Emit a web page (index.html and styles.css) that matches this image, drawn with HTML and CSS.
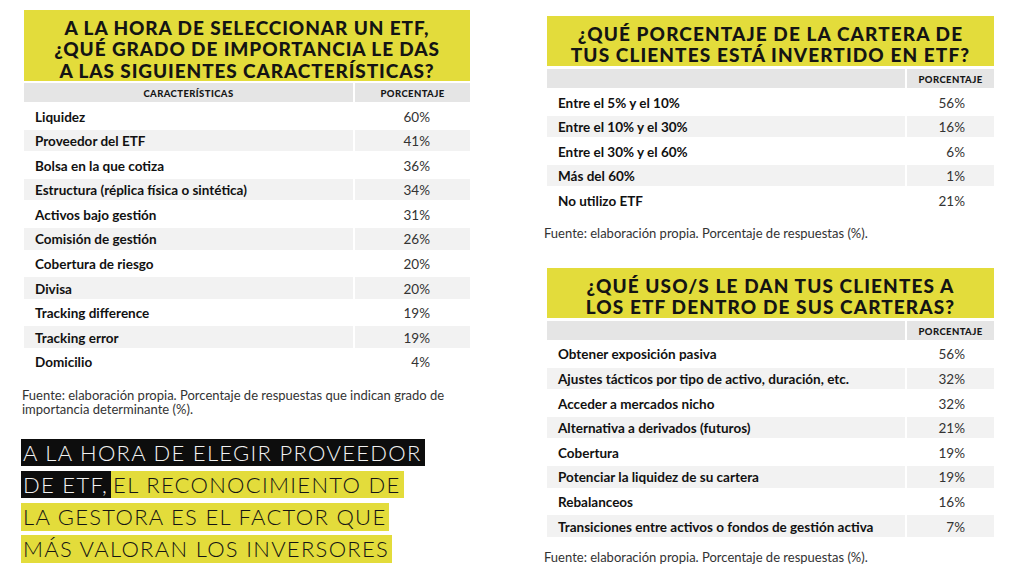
FILE: index.html
```html
<!DOCTYPE html>
<html lang="es">
<head>
<meta charset="utf-8">
<title>ETF encuesta</title>
<link rel="stylesheet" href="styles.css">
</head>
<body>
<div class="page">
  <section class="col col-left">
    <h2 class="title title-lg">A LA HORA DE SELECCIONAR UN ETF,<br>¿QUÉ GRADO DE IMPORTANCIA LE DAS<br>A LAS SIGUIENTES CARACTERÍSTICAS?</h2>
    <div class="tbl tbl-left">
      <div class="th">CARACTERÍSTICAS</div><div class="th">PORCENTAJE</div>
      <div class="td lbl">Liquidez</div><div class="td val">60%</div>
      <div class="td lbl alt">Proveedor del ETF</div><div class="td val alt">41%</div>
      <div class="td lbl">Bolsa en la que cotiza</div><div class="td val">36%</div>
      <div class="td lbl alt">Estructura (réplica física o sintética)</div><div class="td val alt">34%</div>
      <div class="td lbl">Activos bajo gestión</div><div class="td val">31%</div>
      <div class="td lbl alt">Comisión de gestión</div><div class="td val alt">26%</div>
      <div class="td lbl">Cobertura de riesgo</div><div class="td val">20%</div>
      <div class="td lbl alt">Divisa</div><div class="td val alt">20%</div>
      <div class="td lbl">Tracking difference</div><div class="td val">19%</div>
      <div class="td lbl alt">Tracking error</div><div class="td val alt">19%</div>
      <div class="td lbl">Domicilio</div><div class="td val">4%</div>
    </div>
    <p class="note note-left">Fuente: elaboración propia. Porcentaje de respuestas que indican grado de<br>importancia determinante (%).</p>
    <div class="callout">
      <div class="cl"><span class="blk">A LA HORA DE ELEGIR PROVEEDOR</span></div>
      <div class="cl"><span class="blk">DE ETF,</span><span class="ylw">EL RECONOCIMIENTO DE</span></div>
      <div class="cl"><span class="ylw">LA GESTORA ES EL FACTOR QUE</span></div>
      <div class="cl"><span class="ylw">MÁS VALORAN LOS INVERSORES</span></div>
    </div>
  </section>

  <section class="col col-right">
    <h2 class="title title-sm t1">¿QUÉ PORCENTAJE DE LA CARTERA DE<br>TUS CLIENTES ESTÁ INVERTIDO EN ETF?</h2>
    <div class="tbl tbl-right">
      <div class="th"></div><div class="th">PORCENTAJE</div>
      <div class="td lbl">Entre el 5% y el 10%</div><div class="td val">56%</div>
      <div class="td lbl alt">Entre el 10% y el 30%</div><div class="td val alt">16%</div>
      <div class="td lbl">Entre el 30% y el 60%</div><div class="td val">6%</div>
      <div class="td lbl alt">Más del 60%</div><div class="td val alt">1%</div>
      <div class="td lbl">No utilizo ETF</div><div class="td val">21%</div>
    </div>
    <p class="note note-r1">Fuente: elaboración propia. Porcentaje de respuestas (%).</p>

    <h2 class="title title-sm t2">¿QUÉ USO/S LE DAN TUS CLIENTES A<br>LOS ETF DENTRO DE SUS CARTERAS?</h2>
    <div class="tbl tbl-right">
      <div class="th"></div><div class="th">PORCENTAJE</div>
      <div class="td lbl">Obtener exposición pasiva</div><div class="td val">56%</div>
      <div class="td lbl alt">Ajustes tácticos por tipo de activo, duración, etc.</div><div class="td val alt">32%</div>
      <div class="td lbl">Acceder a mercados nicho</div><div class="td val">32%</div>
      <div class="td lbl alt">Alternativa a derivados (futuros)</div><div class="td val alt">21%</div>
      <div class="td lbl">Cobertura</div><div class="td val">19%</div>
      <div class="td lbl alt">Potenciar la liquidez de su cartera</div><div class="td val alt">19%</div>
      <div class="td lbl">Rebalanceos</div><div class="td val">16%</div>
      <div class="td lbl alt">Transiciones entre activos o fondos de gestión activa</div><div class="td val alt">7%</div>
    </div>
    <p class="note note-r2">Fuente: elaboración propia. Porcentaje de respuestas (%).</p>
  </section>
</div>
</body>
</html>
```

FILE: styles.css
```css
* { box-sizing: border-box; }

html, body {
  margin: 0;
  padding: 0;
  background: #ffffff;
}

body {
  font-family: Lato, "Liberation Sans", sans-serif;
  color: #111;
  width: 1024px;
  height: 587px;
  overflow: hidden;
}

.page {
  display: flex;
  align-items: flex-start;
  padding-left: 22px;
}

.col-left {
  width: 448px;
  padding-top: 10px;
}

.col-right {
  width: 450px;
  margin-left: 74px;
  padding-top: 16px;
}

/* Titles */
.title {
  margin: 0;
  background: #e3dc3b;
  color: #141414;
  font-weight: 900;
  text-align: center;
  text-transform: uppercase;
  white-space: nowrap;
}

.title-lg {
  margin-left: 2px;
  width: 446px;
  height: 71px;
  padding-top: 7px;
  font-size: 19px;
  line-height: 21.3px;
  letter-spacing: 0.9px;
}

.title-sm {
  margin-left: 3px;
  width: 447px;
  height: 50px;
  font-size: 19px;
  line-height: 21.3px;
  letter-spacing: 1.1px;
}

.t1 { padding-top: 7px; }
.t2 { padding-top: 7px; }

/* Tables */
.tbl {
  display: grid;
  column-gap: 2px;
  row-gap: 3px;
  grid-auto-rows: 21.6px;
}

.tbl-left {
  margin: 2px 0 0 2px;
  grid-template-columns: 329px 115px;
  grid-template-rows: 19px;
}

.tbl-right {
  margin: 3px 0 0 3px;
  grid-template-columns: 358px 87px;
  grid-template-rows: 19px;
}

.th {
  background: #e5e5e5;
  font-size: 9.5px;
  font-weight: 900;
  letter-spacing: 0.4px;
  text-align: center;
  line-height: 19px;
  padding-top: 1px;
  color: #161616;
}

.td {
  font-size: 13.5px;
  line-height: 21.6px;
  padding-top: 1.5px;
}

.td.alt { background: #f2f2f2; }

.lbl {
  font-weight: 700;
  padding-left: 11px;
  color: #111;
  white-space: nowrap;
}

.val {
  font-weight: 400;
  text-align: right;
  color: #333333;
}

.tbl-left .val { padding-right: 40px; }
.tbl-right .val { padding-right: 29px; }

/* Notes */
.note {
  margin: 0;
  font-size: 13px;
  line-height: 14px;
  font-weight: 400;
  color: #333333;
  white-space: nowrap;
}

.note-left { margin-top: 15px; }
.note-r1 { margin-top: 15px; margin-bottom: 28px; }
.note-r2 { margin-top: 13px; }

/* Callout */
.callout {
  margin-top: 23px;
  margin-left: -1px;
  display: flex;
  flex-direction: column;
  align-items: flex-start;
  row-gap: 4.8px;
}

.cl {
  display: flex;
  height: 27.5px;
}

.cl span {
  display: block;
  font-size: 22px;
  font-weight: 300;
  line-height: 27.5px;
  letter-spacing: 1.3px;
  padding: 0 3px 0 2px;
  white-space: nowrap;
}

.blk {
  background: #0d0d0d;
  color: #f2f2f2;
}

.ylw {
  background: #e3dc3b;
  color: #141414;
}
```
